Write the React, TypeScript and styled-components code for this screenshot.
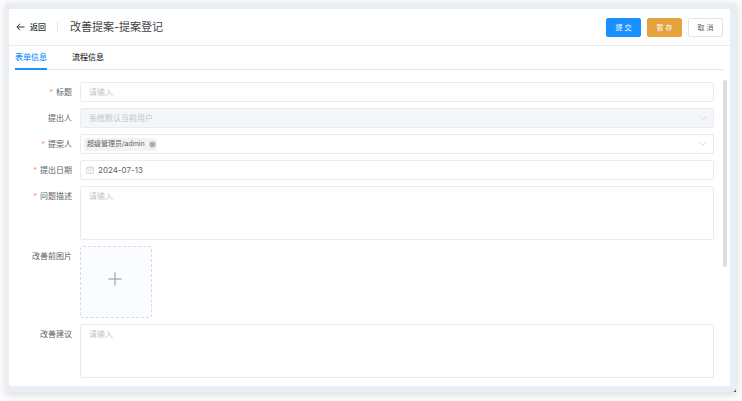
import React from "react";
import styled, { createGlobalStyle, css } from "styled-components";

const GlobalStyle = createGlobalStyle`
  *, *::before, *::after { box-sizing: border-box; }
  body {
    margin: 0;
    background: #fcfcfc;
    color: #606266;
    font-family: Inter, "Noto Sans CJK SC", sans-serif;
    font-size: 8px;
    line-height: 12px;
  }
  button, input, select, textarea { font: inherit; color: inherit; }
`;

const Page = styled.div`
  display: flex;
  min-height: 100vh;
  padding: 3px 6px 9px;
`;

const Shadow = styled.div`
  flex: 1;
  display: flex;
  background: linear-gradient(#444, #444) right bottom / 4px 4px no-repeat;
  box-shadow: 0 2px 8px rgba(0, 0, 0, 0.14);
`;

const Frame = styled.div`
  flex: 1;
  display: flex;
  padding: 6px 6px 6px 3px;
  background: #e9edf6;
  border-bottom-right-radius: 4px;
`;

const Panel = styled.main`
  flex: 1;
  display: flex;
  flex-direction: column;
  min-width: 0;
  background: #fff;
`;

const Header = styled.header`
  display: flex;
  align-items: center;
  height: 37px;
  padding: 0 7px;
  border-bottom: 1px solid #e9ecf2;
`;

const BackButton = styled.button`
  display: flex;
  align-items: center;
  gap: 5px;
  padding: 0;
  border: 0;
  background: none;
  color: #303133;
  font-weight: 500;
`;

const Divider = styled.span`
  width: 1px;
  height: 10px;
  margin: 0 12px 0 11px;
  background: #e4e7ed;
`;

const Title = styled.h1`
  flex: 1;
  margin: 0;
  color: #404246;
  font-size: 11px;
  line-height: 16px;
  font-weight: 400;
`;

const Actions = styled.div`
  display: flex;
  gap: 6px;
`;

const tones = {
  primary: css`background: #1890ff; border-color: #1890ff; color: #fff;`,
  warning: css`background: #e6a23c; border-color: #e6a23c; color: #fff;`,
  plain: css`background: #fff; border-color: #e2e4ea; color: #606266;`,
};

const ActionButton = styled.button<{ $tone: keyof typeof tones }>`
  width: 35px;
  height: 19px;
  padding: 0;
  border: 1px solid;
  border-radius: 2px;
  font-size: 7px;
  line-height: 17px;
  ${({ $tone }) => tones[$tone]}
`;

const TabBar = styled.div`
  display: flex;
  gap: 25px;
  margin: 0 7px 0 6px;
  height: 24px;
  border-bottom: 1px solid #e2e6ee;
`;

const Tab = styled.button<{ $active?: boolean }>`
  height: 24px;
  padding: 0 0 1px;
  border: 0;
  border-bottom: 2px solid ${({ $active }) => ($active ? "#1890ff" : "transparent")};
  background: none;
  color: ${({ $active }) => ($active ? "#1890ff" : "#303133")};
  font-weight: 500;
`;

const Body = styled.div`
  flex: 1;
  display: flex;
  padding: 10px 3px 8px 0;
`;

const Form = styled.form`
  flex: 1;
  min-width: 0;
  display: flex;
  flex-direction: column;
  gap: 6px;
  padding: 2px 9px 0 0;
`;

const ScrollThumb = styled.div`
  width: 4px;
  height: 187px;
  border-radius: 2px;
  background: #dddee0;
`;

const Row = styled.div`
  display: grid;
  grid-template-columns: 63px minmax(0, 1fr);
  column-gap: 8px;
  align-items: start;
`;

const Label = styled.label<{ $required?: boolean }>`
  line-height: 20px;
  text-align: right;
  white-space: nowrap;
  ${({ $required }) =>
    $required &&
    css`
      &::before {
        content: "*";
        margin-right: 3px;
        color: #f78989;
        font-size: 7px;
        line-height: 1;
      }
    `}
`;

const fieldBox = css`
  width: 100%;
  border: 1px solid #e9ebef;
  border-radius: 2px;
  background: #fff;
`;

const TextInput = styled.input`
  ${fieldBox}
  height: 20px;
  padding: 0 8px;
  &::placeholder { color: #c0c4cc; opacity: 1; }
`;

const TextArea = styled.textarea`
  ${fieldBox}
  display: block;
  height: 54px;
  padding: 3px 8px;
  resize: none;
  &::placeholder { color: #c0c4cc; opacity: 1; }
`;

const FieldShell = styled.div<{ $disabled?: boolean }>`
  ${fieldBox}
  display: flex;
  align-items: center;
  height: 20px;
  padding: 0 6px 0 3px;
  ${({ $disabled }) => $disabled && css`background: #f4f6fa; color: #c0c4cc;`}
`;

const BareSelect = styled.select`
  flex: 1;
  min-width: 0;
  height: 18px;
  padding: 0 5px;
  border: 0;
  background: none;
  appearance: none;
  &:disabled { color: #c0c4cc; opacity: 1; }
`;

const BareInput = styled.input`
  flex: 1;
  min-width: 0;
  height: 18px;
  padding: 0 4px;
  border: 0;
  outline: 0;
  background: none;
`;

const Tag = styled.span`
  display: flex;
  align-items: center;
  gap: 4px;
  height: 13px;
  padding: 0 1px 0 3px;
  border-radius: 2px;
  background: #f2f3f5;
  font-size: 7px;
`;

const IconButton = styled.button`
  display: flex;
  padding: 0;
  border: 0;
  background: none;
`;

const UploadTile = styled.button`
  display: flex;
  align-items: center;
  justify-content: center;
  width: 72px;
  height: 72px;
  padding: 0 2px 6px 0;
  border: 1px dashed #d3dbe8;
  border-radius: 3px;
  background: #fbfcff;
`;

const DateIconSlot = styled.span`
  display: flex;
  padding-left: 2px;
`;

const BackArrow = () => (
  <svg width="9" height="8" viewBox="0 0 9 8" fill="none" stroke="#303133" strokeWidth="1" aria-hidden="true">
    <path d="M8.5 4H1M4 .8 .9 4 4 7.2" />
  </svg>
);

const Chevron = () => (
  <svg width="8" height="8" viewBox="0 0 8 8" fill="none" stroke="#c8ccd3" strokeWidth="0.8" aria-hidden="true">
    <path d="M1 2.4 4 5.4 7 2.4" />
  </svg>
);

const CloseDot = () => (
  <svg width="7" height="7" viewBox="0 0 7 7" aria-hidden="true">
    <circle cx="3.5" cy="3.5" r="3.2" fill="#b4b8bf" />
    <path d="M2.3 2.3 4.7 4.7M4.7 2.3 2.3 4.7" stroke="#858b94" strokeWidth="0.8" />
  </svg>
);

const CalendarIcon = () => (
  <svg width="8" height="8" viewBox="0 0 8 8" fill="none" stroke="#c0c4cc" strokeWidth="0.6" aria-hidden="true">
    <path d="M.5 1.3h7v6.2h-7zM.5 3.1h7M2.3.3v1.6M5.7.3v1.6" />
    <path d="M2 4.6h4M2 6h4" strokeWidth="0.4" />
  </svg>
);

const PlusIcon = () => (
  <svg width="14" height="14" viewBox="0 0 14 14" stroke="#8c939d" strokeWidth="1" aria-hidden="true">
    <path d="M7 .3v13.4M.3 7h13.4" />
  </svg>
);

export default function App() {
  return (
    <>
      <GlobalStyle />
      <Page lang="zh-CN">
        <Shadow>
          <Frame>
            <Panel>
              <Header>
                <BackButton type="button">
                  <BackArrow />
                  返回
                </BackButton>
                <Divider />
                <Title>改善提案-提案登记</Title>
                <Actions>
                  <ActionButton type="submit" form="proposal" $tone="primary">提 交</ActionButton>
                  <ActionButton type="button" $tone="warning">暂 存</ActionButton>
                  <ActionButton type="button" $tone="plain">取 消</ActionButton>
                </Actions>
              </Header>
              <TabBar role="tablist">
                <Tab type="button" role="tab" aria-selected="true" $active>表单信息</Tab>
                <Tab type="button" role="tab" aria-selected="false">流程信息</Tab>
              </TabBar>
              <Body>
                <Form id="proposal" onSubmit={(e) => e.preventDefault()}>
                  <Row>
                    <Label htmlFor="title" $required>标题</Label>
                    <TextInput id="title" placeholder="请输入" />
                  </Row>
                  <Row>
                    <Label htmlFor="submitter">提出人</Label>
                    <FieldShell $disabled>
                      <BareSelect id="submitter" disabled>
                        <option>系统默认当前用户</option>
                      </BareSelect>
                      <Chevron />
                    </FieldShell>
                  </Row>
                  <Row>
                    <Label htmlFor="proposer" $required>提案人</Label>
                    <FieldShell>
                      <Tag>
                        超级管理员/admin
                        <IconButton type="button" aria-label="移除">
                          <CloseDot />
                        </IconButton>
                      </Tag>
                      <BareInput id="proposer" role="combobox" aria-expanded="false" />
                      <Chevron />
                    </FieldShell>
                  </Row>
                  <Row>
                    <Label htmlFor="date" $required>提出日期</Label>
                    <FieldShell>
                      <DateIconSlot>
                        <CalendarIcon />
                      </DateIconSlot>
                      <BareInput id="date" defaultValue="2024-07-13" />
                    </FieldShell>
                  </Row>
                  <Row>
                    <Label htmlFor="problem" $required>问题描述</Label>
                    <TextArea id="problem" placeholder="请输入" />
                  </Row>
                  <Row>
                    <Label htmlFor="photo">改善前图片</Label>
                    <UploadTile id="photo" type="button">
                      <PlusIcon />
                    </UploadTile>
                  </Row>
                  <Row>
                    <Label htmlFor="advice">改善建议</Label>
                    <TextArea id="advice" placeholder="请输入" />
                  </Row>
                </Form>
                <ScrollThumb />
              </Body>
            </Panel>
          </Frame>
        </Shadow>
      </Page>
    </>
  );
}
